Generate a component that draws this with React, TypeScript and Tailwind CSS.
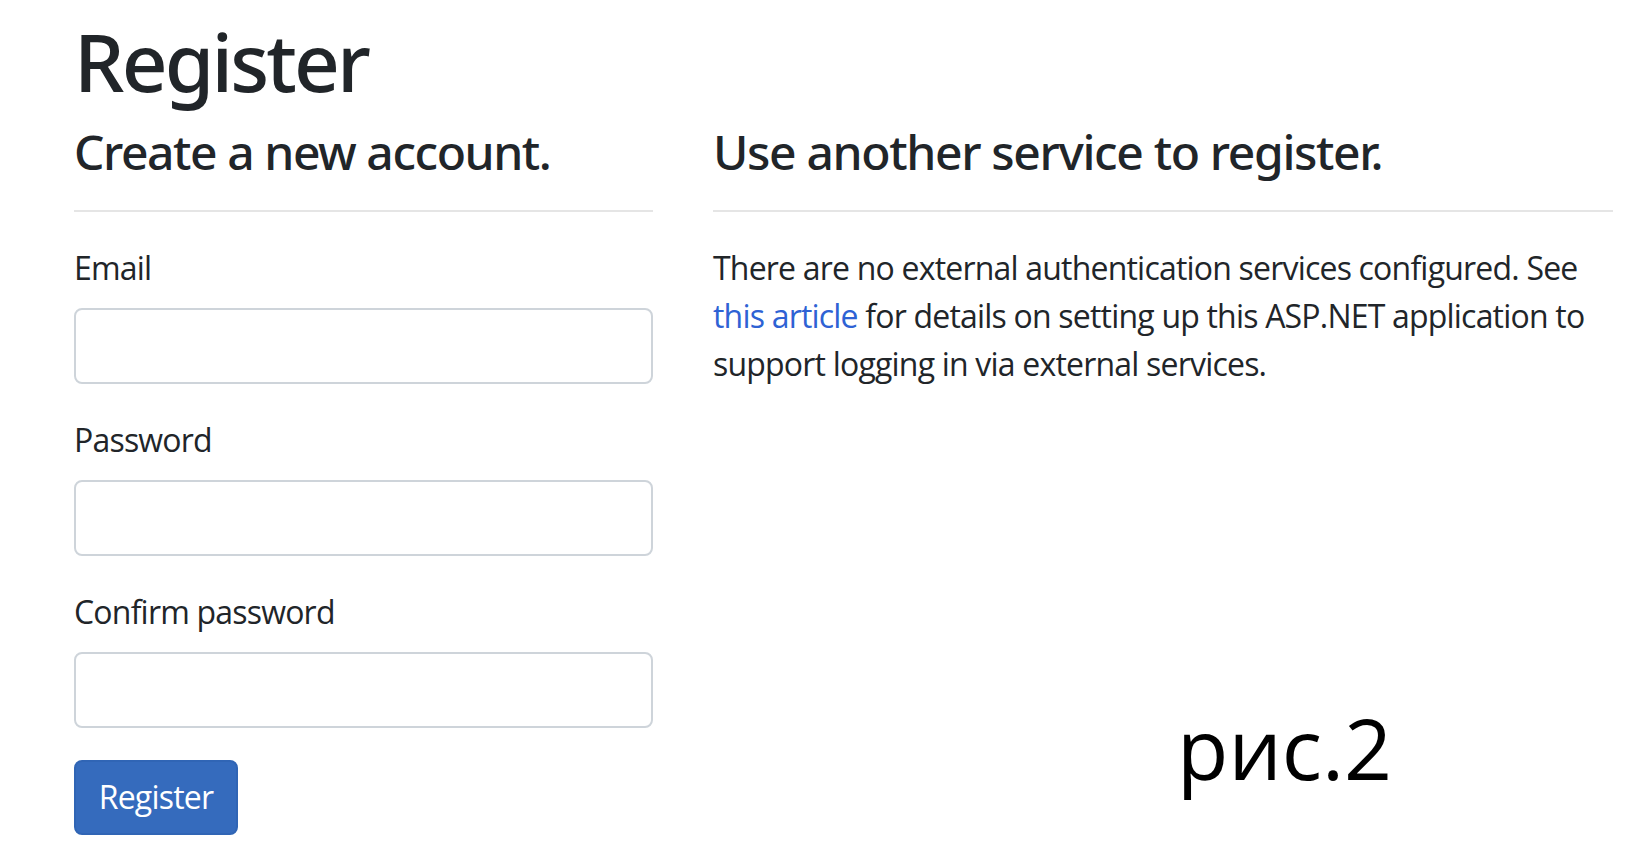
export default function App() {
  const fields = ['Email', 'Password', 'Confirm password'];

  return (
    <div className="min-h-screen bg-white text-[#212529] font-['Open_Sans',sans-serif] overflow-hidden">
      <div className="pl-[74px] pt-[13px]">
        <h1 className="font-['Noto_Sans',sans-serif] text-[80px] leading-[96px] font-medium mb-[14px] tracking-[-0.036em]">Register</h1>

        <div className="flex gap-[60px]">
          {/* left: form */}
          <div className="w-[579px] shrink-0">
            <h4 className="font-['Noto_Sans',sans-serif] text-[48px] leading-[57.6px] font-medium tracking-[-0.03em]">Create a new account.</h4>
            <hr className="mt-[29px] mb-[32px] border-0 h-[2px] bg-[#e5e5e5]" />
            {fields.map((label) => (
              <div key={label} className="mb-[32px]">
                <label className="block text-[32px] leading-[48px] mb-[16px] tracking-[-0.025em]">{label}</label>
                <input
                  type={label === 'Email' ? 'email' : 'password'}
                  className="block w-full h-[76px] border-2 border-[#ced4da] rounded-[8px] bg-white outline-none"
                />
              </div>
            ))}
            <button className="w-[164px] h-[75px] rounded-[8px] bg-[#356bbd] border-2 border-[#3065b5] text-white text-[32px] leading-[48px] tracking-[-0.025em]">
              Register
            </button>
          </div>

          {/* right: external services */}
          <div className="w-[900px] shrink-0">
            <h4 className="font-['Noto_Sans',sans-serif] text-[48px] leading-[57.6px] font-medium tracking-[-0.028em]">Use another service to register.</h4>
            <hr className="mt-[29px] mb-[32px] border-0 h-[2px] bg-[#e5e5e5]" />
            <p className="text-[32px] leading-[48px] tracking-[-0.025em]">
              There are no external authentication services configured. See{' '}
              <a href="#" className="text-[#2e62d4]">this article</a> for details on setting up this ASP.NET
              application to support logging in via external services.
            </p>
            <div className="mt-[318px] ml-[464px] text-[84px] leading-none text-black">рис.2</div>
          </div>
        </div>
      </div>
    </div>
  );
}
